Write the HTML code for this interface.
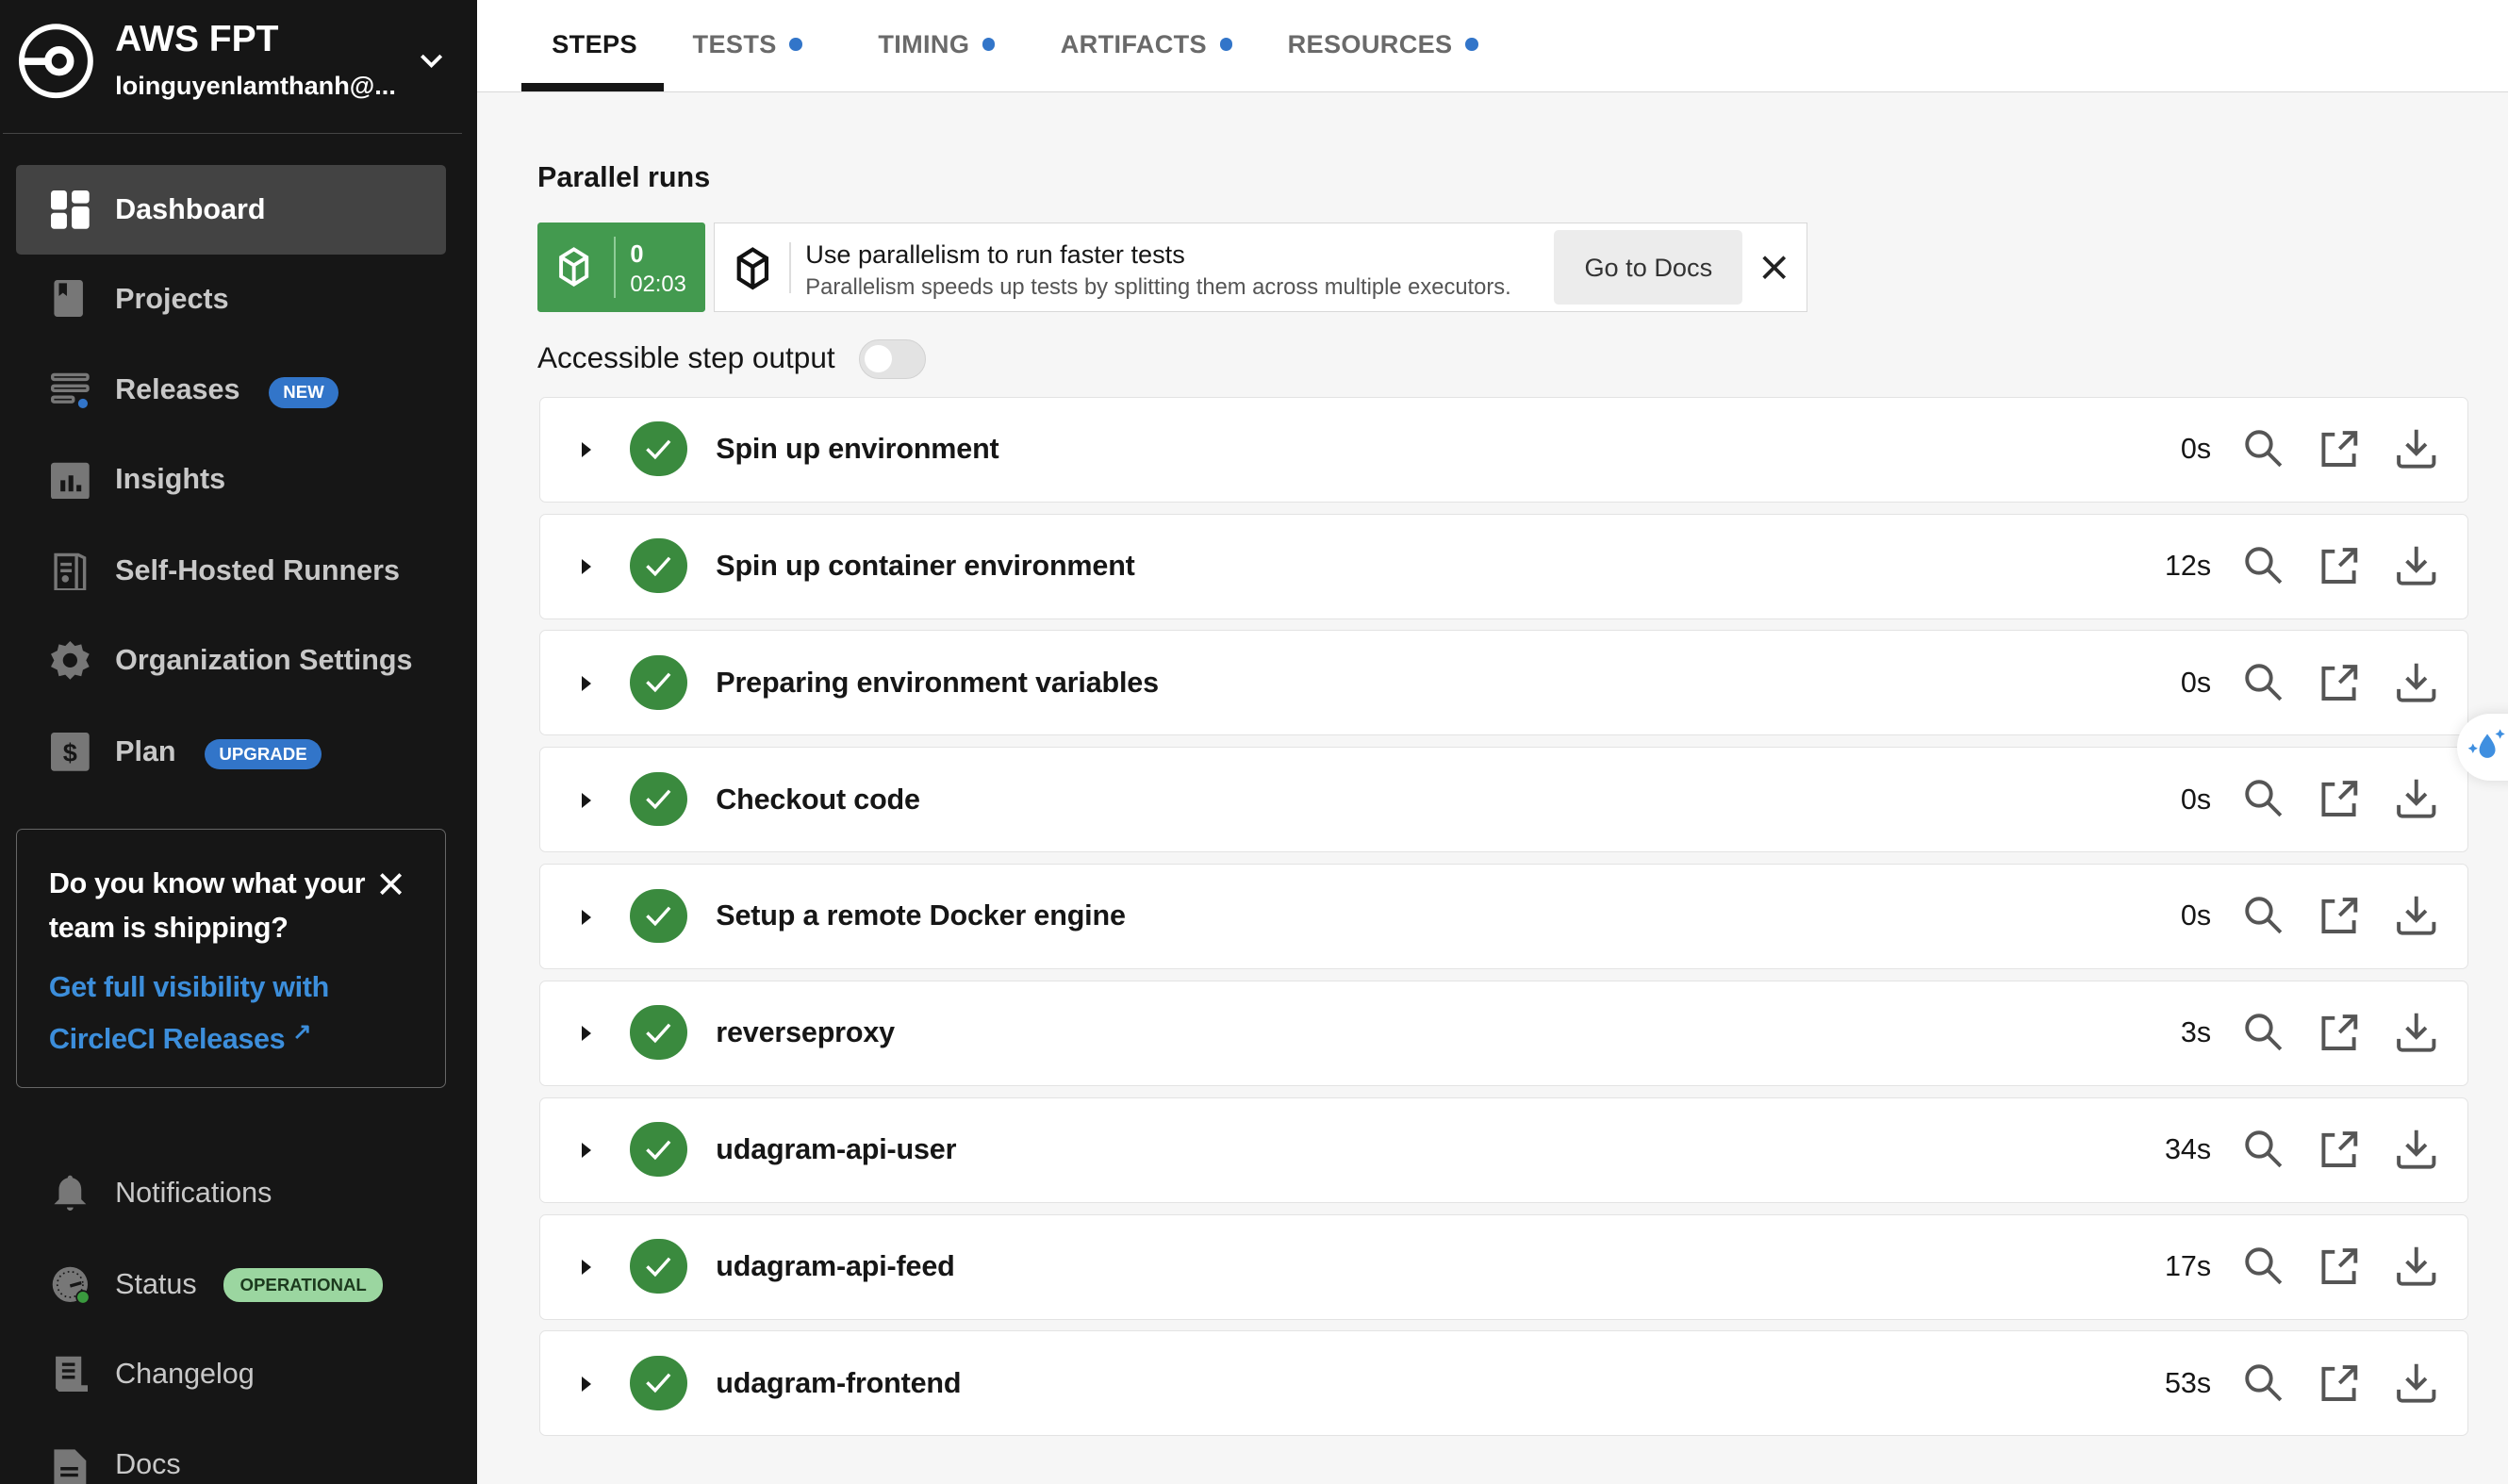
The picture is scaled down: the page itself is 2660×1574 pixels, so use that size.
<!DOCTYPE html>
<html><head><meta charset="utf-8"><style>
html{zoom:1.69643;background:#f6f6f6;overflow:hidden;height:928px}
*{box-sizing:border-box;margin:0;padding:0}
body{width:1568px;height:928px;overflow:hidden;font-family:"Liberation Sans",Arial,sans-serif;background:#f6f6f6;position:relative}
.sb{position:absolute;left:0;top:0;width:298px;height:928px;background:#161616;color:#fff;overflow:hidden}
.main{position:absolute;left:298px;top:0;right:0;bottom:0;overflow:hidden}
.tabs{height:58px;background:#fff;border-bottom:1px solid #d8d8d8;position:relative}
.tab{position:absolute;top:18px;font-size:16px;font-weight:bold;color:#6a6a6a;letter-spacing:.2px}
.tab .d{display:inline-block;width:8px;height:8px;border-radius:50%;background:#3275c9;margin-left:8px;vertical-align:1px}
.nav{position:absolute;left:10px;width:269px;height:56px;border-radius:3px;display:flex;align-items:center;font-size:18px;font-weight:bold;color:#c8c8c8}
.nav svg{position:absolute;left:22px}
.nav span.t{position:absolute;left:62px}
.badge{position:absolute;font-size:11px;font-weight:bold;color:#fff;background:#3275c9;border-radius:10px;padding:3px 9px}
.row{position:absolute;left:39px;width:1206px;height:66px;background:#fff;border:1px solid #e3e3e3;border-radius:4px}
.row .ar{position:absolute;left:26px;top:28px;width:0;height:0;border-left:6px solid #161616;border-top:5px solid transparent;border-bottom:5px solid transparent}
.row .ck{position:absolute;left:56px;top:15px;width:36px;height:34px;border-radius:17px;background:#3a8a3e}
.row .nm{position:absolute;left:110px;top:22px;font-size:18px;font-weight:bold;color:#161616;letter-spacing:-.1px}
.row .tm{position:absolute;right:160px;top:22px;font-size:18px;color:#161616}
.row .ic{position:absolute;top:19px}
</style></head><body>
<div class="sb">
  <svg style="position:absolute;left:10px;top:14px" width="50" height="50" viewBox="0 0 50 50"><circle cx="25" cy="24" r="21.5" fill="none" stroke="#fff" stroke-width="3.5"/><circle cx="27" cy="24" r="7" fill="none" stroke="#fff" stroke-width="4.5"/><rect x="4" y="22" width="16" height="4.5" fill="#fff"/></svg>
  <div style="position:absolute;left:72px;top:12px;font-size:23px;font-weight:bold">AWS FPT</div>
  <div style="position:absolute;left:72px;top:44px;font-size:16px;font-weight:bold">loinguyenlamthanh@...</div>
  <svg style="position:absolute;left:262px;top:32px" width="16" height="12" viewBox="0 0 16 12"><path d="M2 3l6 6 6-6" fill="none" stroke="#fff" stroke-width="2.3"/></svg>
  <div style="position:absolute;left:2px;top:83px;width:287px;height:1px;background:#444"></div>

  <div class="nav" style="top:103px;background:#434343;color:#fff"><svg width="24" height="24" viewBox="0 0 24 24" fill="#fff"><rect x="0" y="0" width="10" height="12" rx="2"/><rect x="0" y="14" width="10" height="10" rx="2"/><rect x="13" y="0" width="11" height="8" rx="2"/><rect x="13" y="10" width="11" height="14" rx="2"/></svg><span class="t">Dashboard</span></div>
  <div class="nav" style="top:159px"><svg width="24" height="24" viewBox="0 0 24 24"><rect x="2" y="0" width="18" height="23" rx="2" fill="#777"/><path d="M5 2h5v8l-2.5-2L5 10z" fill="#161616"/></svg><span class="t">Projects</span></div>
  <div class="nav" style="top:216px"><svg width="24" height="24" viewBox="0 0 24 24" fill="none" stroke="#777" stroke-width="2"><rect x="1" y="2" width="22" height="3" rx="1"/><rect x="1" y="9" width="22" height="3" rx="1"/><rect x="1" y="16" width="13" height="3" rx="1"/><circle cx="20" cy="20" r="3" fill="#3275c9" stroke="none"/></svg><span class="t">Releases</span><span class="badge" style="left:158px;top:20px">NEW</span></div>
  <div class="nav" style="top:272px"><svg width="24" height="24" viewBox="0 0 24 24"><rect x="0" y="1" width="24" height="23" rx="2" fill="#777"/><rect x="6" y="12" width="3" height="7" fill="#161616"/><rect x="11" y="9" width="3" height="10" fill="#161616"/><rect x="16" y="15" width="3" height="4" fill="#161616"/></svg><span class="t">Insights</span></div>
  <div class="nav" style="top:329px"><svg width="24" height="24" viewBox="0 0 24 24" fill="none" stroke="#777" stroke-width="2"><path d="M3 2h14l4 2v20H3z"/><path d="M16 2v22M6 8h7M6 12h7"/><circle cx="9" cy="17" r="1.2" fill="#777"/></svg><span class="t">Self-Hosted Runners</span></div>
  <div class="nav" style="top:385px"><svg width="24" height="24" viewBox="0 0 24 24"><path d="M12 0l3 3 4-1 1 4 4 2-2 4 2 4-4 2-1 4-4-1-3 3-3-3-4 1-1-4-4-2 2-4-2-4 4-2 1-4 4 1z" fill="#777"/><circle cx="12" cy="12" r="4.5" fill="#161616"/></svg><span class="t">Organization Settings</span></div>
  <div class="nav" style="top:442px"><svg width="24" height="24" viewBox="0 0 24 24"><rect x="0" y="0" width="24" height="24" rx="2" fill="#777"/><text x="12" y="18" font-size="16" font-weight="bold" text-anchor="middle" fill="#161616" font-family="Liberation Sans">$</text></svg><span class="t">Plan</span><span class="badge" style="left:118px;top:20px">UPGRADE</span></div>

  <div style="position:absolute;left:10px;top:518px;width:269px;height:162px;border:1px solid #666;border-radius:4px">
    <div style="position:absolute;left:20px;top:20px;font-size:18px;font-weight:bold;line-height:28px;color:#fff;letter-spacing:-.2px">Do you know what your<br>team is shipping?</div>
    <svg style="position:absolute;left:226px;top:26px" width="16" height="16" viewBox="0 0 16 16"><path d="M2 2l12 12M14 2L2 14" stroke="#fff" stroke-width="2.2"/></svg>
    <div style="position:absolute;left:20px;top:85px;font-size:18px;font-weight:bold;line-height:28px;color:#3c8edb;letter-spacing:-.2px">Get full visibility with<br>CircleCI Releases <span style="font-size:14px;vertical-align:6px">↗</span></div>
  </div>

  <div class="nav" style="top:718px;font-weight:normal"><svg width="24" height="24" viewBox="0 0 24 24"><path d="M12 1c1 0 1.5.7 1.5 1.5C17 3.5 19 6 19 10v6l3 3H2l3-3v-6c0-4 2-6.5 5.5-7.5C10.5 1.7 11 1 12 1zM10 21h4c0 1-1 2-2 2s-2-1-2-2z" fill="#777"/></svg><span class="t">Notifications</span></div>
  <div class="nav" style="top:775px;font-weight:normal"><svg width="24" height="24" viewBox="0 0 24 24"><circle cx="12" cy="12" r="11" fill="#777"/><circle cx="12" cy="12" r="8" fill="none" stroke="#161616" stroke-width="1" stroke-dasharray="1 2"/><path d="M12 13l7-2" stroke="#161616" stroke-width="2"/><circle cx="20" cy="20" r="4" fill="#3a9a3e" stroke="#161616" stroke-width="1"/></svg><span class="t">Status</span><span class="badge" style="left:130px;top:18px;background:#9bd6a0;color:#1c3a1e;padding:4px 10px">OPERATIONAL</span></div>
  <div class="nav" style="top:831px;font-weight:normal"><svg width="24" height="24" viewBox="0 0 24 24"><path d="M3 1h16v18h4v4H5l-2-2z" fill="#777"/><path d="M7 6h8M7 10h8M7 14h8" stroke="#161616" stroke-width="2"/></svg><span class="t">Changelog</span></div>
  <div class="nav" style="top:888px;font-weight:normal"><svg width="24" height="24" viewBox="0 0 24 24"><path d="M2 2h13l7 7v15H2z" fill="#777"/><path d="M6 14h11M6 18h11" stroke="#161616" stroke-width="2"/></svg><span class="t">Docs</span></div>
</div>

<div class="main">
  <div class="tabs">
    <div class="tab" style="left:47px;color:#161616">STEPS</div>
    <div style="position:absolute;left:28px;top:52px;width:89px;height:5px;background:#161616"></div>
    <div class="tab" style="left:135px">TESTS<span class="d"></span></div>
    <div class="tab" style="left:251px">TIMING<span class="d"></span></div>
    <div class="tab" style="left:365px">ARTIFACTS<span class="d"></span></div>
    <div class="tab" style="left:507px">RESOURCES<span class="d"></span></div>
  </div>
  <div style="position:absolute;left:38px;top:101px;font-size:18px;font-weight:bold;color:#161616">Parallel runs</div>
  <div style="position:absolute;left:38px;top:139px;width:105px;height:56px;background:#439a4f;border-radius:2px;color:#fff">
    <svg style="position:absolute;left:12px;top:15px" width="22" height="26" viewBox="0 0 22 26" fill="none" stroke="#fff" stroke-width="2.3"><path d="M11 2l8 5v12l-8 5-8-5V7zM3 7l8 5 8-5M11 12v12"/></svg>
    <div style="position:absolute;left:48px;top:9px;width:1px;height:38px;background:#8fcc97"></div>
    <div style="position:absolute;left:58px;top:12px;font-size:15px;font-weight:bold">0</div>
    <div style="position:absolute;left:58px;top:31px;font-size:14px">02:03</div>
  </div>
  <div style="position:absolute;left:148px;top:139px;width:684px;height:56px;background:#fff;border:1px solid #d8d8d8">
    <svg style="position:absolute;left:12px;top:14px" width="24" height="28" viewBox="0 0 22 26" fill="none" stroke="#111" stroke-width="2.3"><path d="M11 2l8 5v12l-8 5-8-5V7zM3 7l8 5 8-5M11 12v12"/></svg>
    <div style="position:absolute;left:47px;top:12px;width:1px;height:32px;background:#ddd"></div>
    <div style="position:absolute;left:57px;top:10px;font-size:16px;color:#161616">Use parallelism to run faster tests</div>
    <div style="position:absolute;left:57px;top:32px;font-size:14px;color:#555">Parallelism speeds up tests by splitting them across multiple executors.</div>
    <div style="position:absolute;left:525px;top:4px;width:118px;height:47px;background:#ececec;border-radius:3px;font-size:16px;color:#333;text-align:center;line-height:47px">Go to Docs</div>
    <svg style="position:absolute;left:655px;top:20px" width="15" height="15" viewBox="0 0 15 15"><path d="M1 1l13 13M14 1L1 14" stroke="#222" stroke-width="2.2"/></svg>
  </div>
  <div style="position:absolute;left:38px;top:213px;font-size:18.6px;color:#161616">Accessible step output</div>
  <div style="position:absolute;left:239px;top:212px;width:42px;height:25px;border-radius:13px;background:#e3e3e3;border:1px solid #d2d2d2"><div style="position:absolute;left:3px;top:3px;width:17px;height:17px;border-radius:50%;background:#fff"></div></div>

  <div id="rows"></div>
  <div style="position:absolute;left:1238px;top:446px;width:60px;height:42px;border-radius:21px;background:#fff;box-shadow:0 0 8px rgba(0,0,0,.12)">
    <svg style="position:absolute;left:6px;top:8px" width="26" height="26" viewBox="0 0 26 26" fill="#3f8fe0"><path d="M13 5c3 4 5 7 5 10a5 5 0 0 1-10 0c0-3 2-6 5-10z"/><path d="M3 13l1-2 1 2 2 1-2 1-1 2-1-2-2-1zM21 2l1 2 2 1-2 1-1 2-1-2-2-1 2-1z"/></svg>
  </div>
</div>
<script>
var d=[["Spin up environment","0s"],["Spin up container environment","12s"],["Preparing environment variables","0s"],["Checkout code","0s"],["Setup a remote Docker engine","0s"],["reverseproxy","3s"],["udagram-api-user","34s"],["udagram-api-feed","17s"],["udagram-frontend","53s"]];
var h="";
var ics='<svg class="ic" style="left:1065px" width="26" height="26" viewBox="0 0 26 26" fill="none" stroke="#555" stroke-width="2.3"><circle cx="10" cy="10" r="7.5"/><path d="M15.5 15.5l8 8"/></svg>'+
'<svg class="ic" style="left:1113px" width="24" height="26" viewBox="0 0 24 26" fill="none" stroke="#555" stroke-width="2.3"><path d="M9 4H2v19h19v-7"/><path d="M12 13L21 4M14 3h8v8"/></svg>'+
'<svg class="ic" style="left:1159px" width="28" height="26" viewBox="0 0 28 26" fill="none" stroke="#555" stroke-width="2.3"><path d="M14 1v15M8 10l6 6 6-6M3 17v5c0 1 1 2 2 2h18c1 0 2-1 2-2v-5"/></svg>';
d.forEach(function(r,i){h+='<div class="row" style="top:'+(248+i*73)+'px"><div class="ar"></div><div class="ck"><svg style="position:absolute;left:9px;top:8px" width="18" height="18" viewBox="0 0 18 18"><path d="M2 9l5 5 9-10" fill="none" stroke="#fff" stroke-width="2"/></svg></div><div class="nm">'+r[0]+'</div><div class="tm">'+r[1]+'</div>'+ics+'</div>';});
document.getElementById("rows").innerHTML=h;
</script>
</body></html>
